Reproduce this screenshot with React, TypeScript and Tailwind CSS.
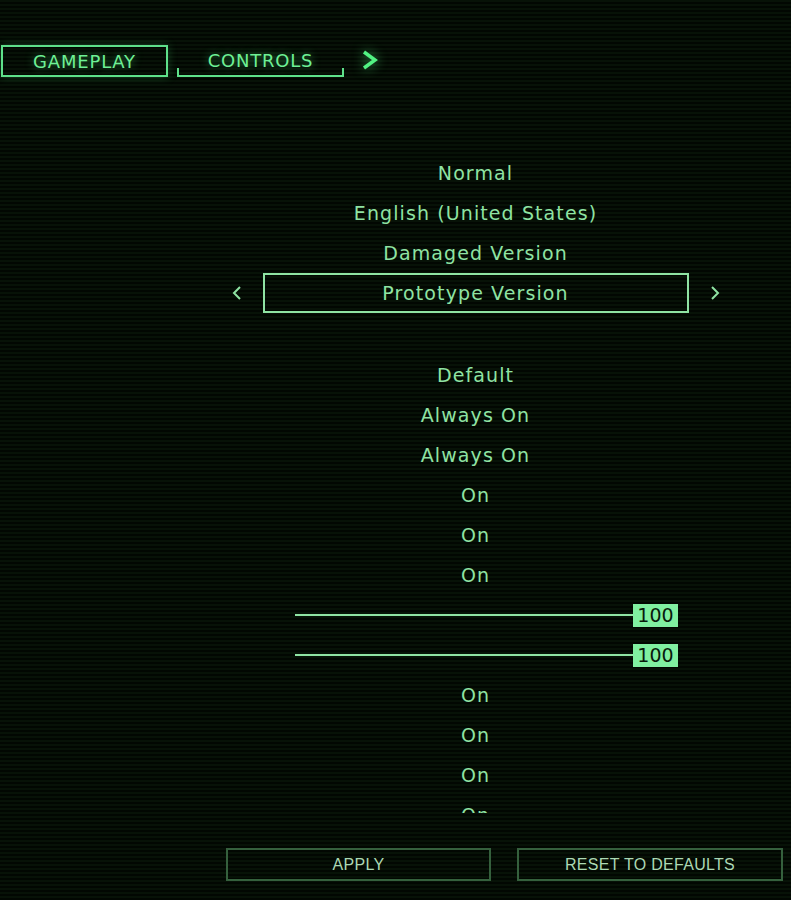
import React from 'react';

type Row =
  | { kind: 'text'; value: string }
  | { kind: 'select'; value: string }
  | { kind: 'slider'; value: number };

const topRows: Row[] = [
  { kind: 'text', value: 'Normal' },
  { kind: 'text', value: 'English (United States)' },
  { kind: 'text', value: 'Damaged Version' },
  { kind: 'select', value: 'Prototype Version' },
];

const lowerRows: Row[] = [
  { kind: 'text', value: 'Default' },
  { kind: 'text', value: 'Always On' },
  { kind: 'text', value: 'Always On' },
  { kind: 'text', value: 'On' },
  { kind: 'text', value: 'On' },
  { kind: 'text', value: 'On' },
  { kind: 'slider', value: 100 },
  { kind: 'slider', value: 100 },
  { kind: 'text', value: 'On' },
  { kind: 'text', value: 'On' },
  { kind: 'text', value: 'On' },
  { kind: 'text', value: 'On' },
];

function Chevron({ dir }: { dir: 'left' | 'right' }) {
  return (
    <svg width="12" height="16" viewBox="0 0 12 16" className="shrink-0">
      <polyline
        points={dir === 'left' ? '9,2 3,8 9,14' : '3,2 9,8 3,14'}
        fill="none"
        stroke="#8fe3a3"
        strokeWidth="2"
      />
    </svg>
  );
}

function SettingRow({ row }: { row: Row }) {
  if (row.kind === 'select') {
    return (
      <div className="h-[40px] flex items-center justify-center gap-[20px]">
        <Chevron dir="left" />
        <div className="w-[426px] h-[40px] border-2 border-[#8fe3a3] flex items-center justify-center">
          {row.value}
        </div>
        <Chevron dir="right" />
      </div>
    );
  }
  if (row.kind === 'slider') {
    return (
      <div className="h-[40px] flex items-center pl-[135px]">
        <div className="w-[340px] h-[2px] bg-[#8fe3a3]" />
        <div className="-ml-[2px] w-[45px] h-[23px] bg-[#80f0a0] text-[#0a1a0c] flex items-center justify-center tracking-[0px]">
          {row.value}
        </div>
      </div>
    );
  }
  return <div className="h-[40px] flex items-center justify-center">{row.value}</div>;
}

export default function App() {
  return (
    <div
      className="relative w-[791px] h-[900px] overflow-hidden text-[#8fe3a3] bg-[repeating-linear-gradient(to_bottom,#071207_0px,#071207_2px,#020702_2px,#020702_4px)]"
      style={{ fontFamily: '"DejaVu Sans", sans-serif' }}
    >
      {/* Tabs */}
      <div className="pt-[45px] flex items-center text-[18px] tracking-[0.8px] text-[#6ef095] [text-shadow:0_0_8px_rgba(90,240,140,0.55)]">
        <div className="ml-[1px] w-[167px] h-[32px] border-2 border-[#5ee08a] flex items-center justify-center shadow-[0_0_10px_rgba(80,230,130,0.25)]">
          GAMEPLAY
        </div>
        <div className="relative ml-[9px] w-[167px] h-[32px] border-b-2 border-[#5ee08a] flex items-center justify-center pt-[1px] before:absolute before:left-0 before:bottom-0 before:w-[2px] before:h-[7px] before:bg-[#5ee08a] after:absolute after:right-0 after:bottom-0 after:w-[2px] after:h-[7px] after:bg-[#5ee08a]">
          CONTROLS
        </div>
        <svg width="20" height="22" viewBox="0 0 20 22" className="ml-[16px] -mt-[2px] drop-shadow-[0_0_6px_rgba(80,240,130,0.7)]">
          <polyline points="4,3 15,11 4,19" fill="none" stroke="#52f283" strokeWidth="3.5" />
        </svg>
      </div>

      {/* Settings list */}
      <div className="mt-[76px] ml-[160px] w-[631px] h-[660px] overflow-hidden text-[19px] tracking-[1.1px]">
        {topRows.map((row, i) => (
          <SettingRow key={`t${i}`} row={row} />
        ))}
        <div className="h-[42px]" />
        {lowerRows.map((row, i) => (
          <SettingRow key={`l${i}`} row={row} />
        ))}
      </div>

      {/* Footer buttons */}
      <div
        className="mt-[35px] pl-[226px] flex gap-[26px] text-[16px] text-[#acd9b4] tracking-[0.3px]"
        style={{ fontFamily: '"Liberation Sans", sans-serif' }}
      >
        <button className="w-[265px] h-[33px] border-2 border-[#35603d] flex items-center justify-center">
          APPLY
        </button>
        <button className="w-[266px] h-[33px] border-2 border-[#35603d] flex items-center justify-center">
          RESET TO DEFAULTS
        </button>
      </div>
    </div>
  );
}
